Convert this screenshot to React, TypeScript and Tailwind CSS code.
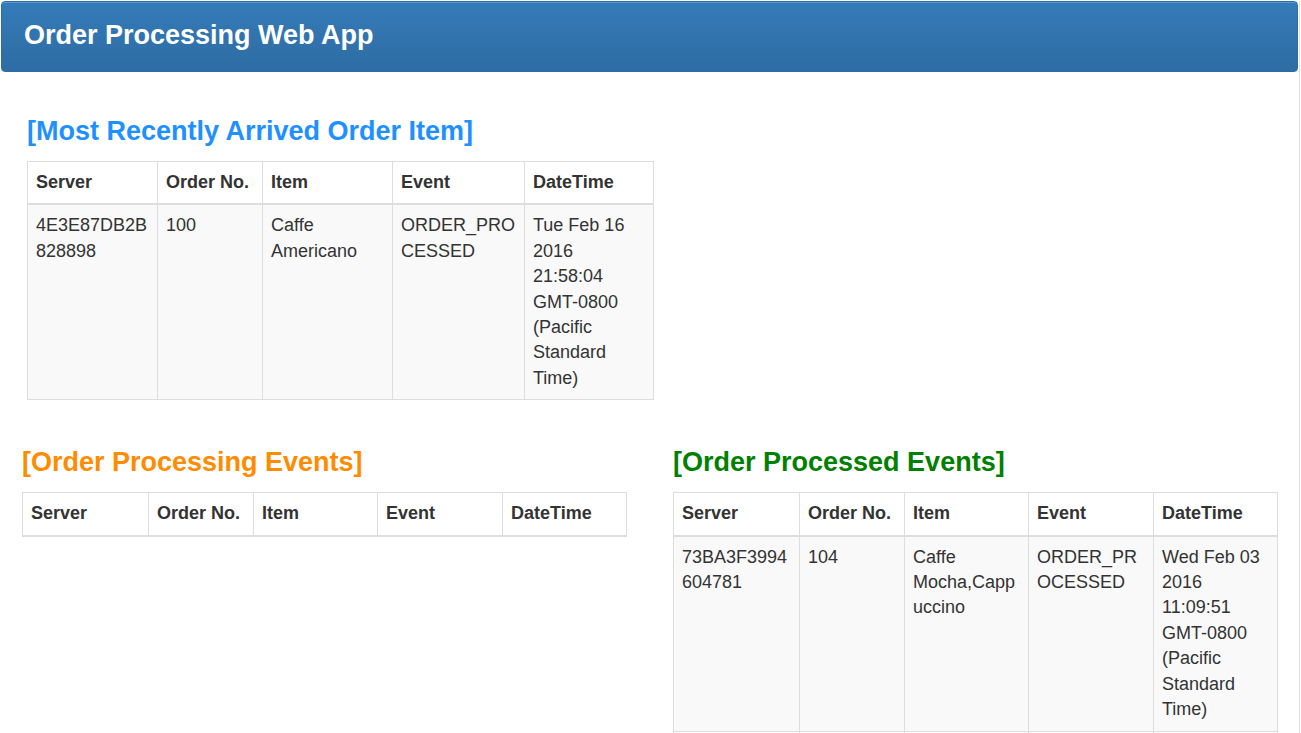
type OrderEvent = {
  server: string;
  orderNo: string;
  item: string;
  event: string;
  dateTime: string;
};

const COLUMNS = ["Server", "Order No.", "Item", "Event", "DateTime"];

const RECENT: OrderEvent[] = [
  {
    server: "4E3E87DB2B828898",
    orderNo: "100",
    item: "Caffe Americano",
    event: "ORDER_PROCESSED",
    dateTime: "Tue Feb 16 2016 21:58:04 GMT-0800 (Pacific Standard Time)",
  },
];

const PROCESSING: OrderEvent[] = [];

const PROCESSED: OrderEvent[] = [
  {
    server: "73BA3F3994604781",
    orderNo: "104",
    item: "Caffe Mocha,Cappuccino",
    event: "ORDER_PROCESSED",
    dateTime: "Wed Feb 03 2016 11:09:51 GMT-0800 (Pacific Standard Time)",
  },
  {
    server: "73BA3F3994604781",
    orderNo: "103",
    item: "Caffe Latte",
    event: "ORDER_PROCESSED",
    dateTime: "Wed Feb 03 2016 11:08:27 GMT-0800 (Pacific Standard Time)",
  },
];

function EventTable({ rows, widths, className }: { rows: OrderEvent[]; widths: number[]; className: string }) {
  return (
    <table className={`table-fixed border-collapse border border-[#ddd] text-[18px] leading-[25.4px] ${className}`}>
      <colgroup>
        {widths.map((w, i) => (
          <col key={i} style={{ width: w }} />
        ))}
      </colgroup>
      <thead>
        <tr>
          {COLUMNS.map((c) => (
            <th
              key={c}
              className="border border-b-2 border-[#ddd] bg-white p-2 text-left align-bottom font-bold"
            >
              {c}
            </th>
          ))}
        </tr>
      </thead>
      <tbody>
        {rows.map((r, i) => (
          <tr key={i} className={i % 2 === 0 ? "bg-[#f9f9f9]" : "bg-white"}>
            {[r.server, r.orderNo, r.item, r.event, r.dateTime].map((v, j) => (
              <td key={j} className="border border-[#ddd] p-2 align-top [overflow-wrap:anywhere]">
                {v}
              </td>
            ))}
          </tr>
        ))}
      </tbody>
    </table>
  );
}

export default function App() {
  return (
    <div className="min-h-screen w-[1300px] border-r border-[#e3e3e3] bg-white font-['Liberation_Sans',Arial,sans-serif] text-[#333]">
      {/* Header bar */}
      <header className="mx-px mt-px flex h-[71px] items-center rounded-[4px] border border-[#2e6da4] bg-linear-to-b from-[#347bb9] to-[#2e6ca3] px-[22px] pb-[3px] shadow-[inset_0_1px_0_#5d97cb]">
        <h1 className="text-[27px] font-bold leading-[30px] text-white">Order Processing Web App</h1>
      </header>

      {/* Most recent */}
      <section className="pl-[27px] pt-[44px]">
        <h2 className="mb-[15px] text-[27px] font-bold leading-[30px] text-[#1e90ff]">
          [Most Recently Arrived Order Item]
        </h2>
        <EventTable rows={RECENT} widths={[130, 105, 130, 132, 129]} className="w-[626px]" />
      </section>

      {/* Processing / processed */}
      <section className="flex gap-[47px] pl-[22px] pt-[47px]">
        <div className="w-[604px]">
          <h2 className="mb-[15px] text-[27px] font-bold leading-[30px] text-[#ff8c00]">
            [Order Processing Events]
          </h2>
          <EventTable rows={PROCESSING} widths={[126, 105, 124, 125, 124]} className="w-[604px]" />
        </div>
        <div className="w-[604px]">
          <h2 className="mb-[15px] text-[27px] font-bold leading-[30px] text-[#008000]">
            [Order Processed Events]
          </h2>
          <EventTable rows={PROCESSED} widths={[126, 105, 124, 125, 124]} className="w-[604px]" />
        </div>
      </section>
    </div>
  );
}
